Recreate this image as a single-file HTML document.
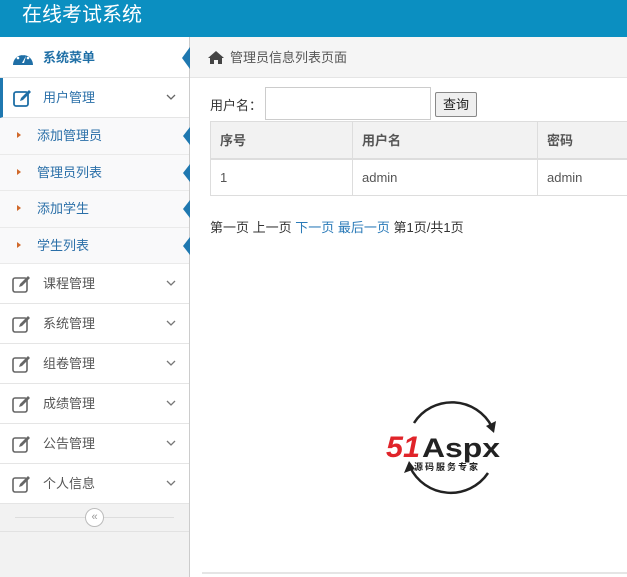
<!DOCTYPE html>
<html><head><meta charset="utf-8"><style>
*{margin:0;padding:0;box-sizing:border-box}
body{width:627px;height:577px;overflow:hidden;font-family:"Liberation Sans","Noto Sans CJK SC",sans-serif;font-size:13px;color:#333;background:#fff;position:relative}
.top{position:absolute;left:0;top:0;width:627px;height:37px;background:#0b8fc1;color:#fff;font-size:20px;line-height:30px;padding-left:22px}
.side{position:absolute;left:0;top:37px;width:190px;height:540px;background:#f2f2f2;border-right:1px solid #ccc}
.row{position:relative;height:40px;border-bottom:1px solid #e5e5e5;background:#fff;line-height:39px;padding-left:43px;color:#555;font-size:13px}
.row svg.ic{position:absolute;left:12px;top:11px}
.row .chev{position:absolute;left:166px;top:16px}
.menuhead{background:#fff;color:#1f6fa6;font-weight:bold;height:41px;line-height:41px}
.sub{position:relative;height:36.5px;line-height:35px;padding-left:37px;color:#2a6fa8;background:#f9f9fa;border-bottom:1px solid #eaeaea}
.sub:before{content:"";position:absolute;left:17px;top:14px;border-left:4px solid #d0692b;border-top:3px solid transparent;border-bottom:3px solid transparent}
.tri{position:absolute;right:-1px;border-right:7px solid #1f78b0;border-top:9px solid transparent;border-bottom:9px solid transparent}
.main{position:absolute;left:190px;top:37px;width:437px;height:540px;background:#fff}
.bc{height:41px;background:#f5f5f5;border-bottom:1px solid #e5e5e5;line-height:41px;padding-left:40px;position:relative;font-size:13px;color:#555}
table{position:absolute;left:20px;top:84px;border-collapse:collapse;width:430px}
td,th{border:1px solid #ddd;text-align:left;padding-left:9px;font-weight:normal;color:#555}
th{height:37px;background:#f2f2f2;font-weight:bold;border-bottom:2px solid #ddd}
td{height:37px;background:#fff}
a{color:#2a7ab8;text-decoration:none}
</style></head><body>
<div class="top">在线考试系统</div>
<div class="side">
 <div class="row menuhead" style="padding-left:43px">
  <svg class="ic" width="22" height="18" viewBox="0 0 22 18" style="top:12px"><path d="M1 16 A10 10 0 1 1 21 16 Z" fill="#1f6fa6"/><circle cx="6" cy="9" r="1.3" fill="#fff"/><circle cx="11" cy="5" r="1.3" fill="#fff"/><circle cx="16" cy="9" r="1.3" fill="#fff"/><path d="M10 14 L14 7 L12 14Z" fill="#fff"/></svg>
  系统菜单<span class="tri" style="top:10px;border-right-width:8px;border-top-width:11px;border-bottom-width:11px"></span></div>
 <div class="row" style="border-left:3px solid #1f78b0;padding-left:40px;color:#2a6fa8;background:#fff">
  <svg class="ic" width="20" height="18" viewBox="0 0 20 18" style="left:10px"><rect x="1" y="3" width="14" height="14" rx="2" fill="none" stroke="#1f6fa6" stroke-width="1.8"/><path d="M7 12 L8 9 L16 1 L18 3 L10 11 Z" fill="#1f6fa6"/></svg>
  用户管理<svg class="chev" width="10" height="7" style="left:163px"><path d="M1 1 L5 5 L9 1" fill="none" stroke="#666" stroke-width="1.3"/></svg></div>
 <div class="sub">添加管理员<span class="tri" style="top:9px"></span></div>
 <div class="sub">管理员列表<span class="tri" style="top:9px"></span></div>
 <div class="sub">添加学生<span class="tri" style="top:9px"></span></div>
 <div class="sub">学生列表<span class="tri" style="top:9px"></span></div>
 <div class="row">%I%课程管理%C%</div>
 <div class="row">%I%系统管理%C%</div>
 <div class="row">%I%组卷管理%C%</div>
 <div class="row">%I%成绩管理%C%</div>
 <div class="row">%I%公告管理%C%</div>
 <div class="row">%I%个人信息%C%</div>
 <div style="height:28px;background:#f2f2f2;border-bottom:1px solid #e2e2e2;position:relative">
  <div style="position:absolute;left:15px;right:15px;top:13px;border-top:1px solid #ddd"></div>
  <div style="position:absolute;left:85px;top:4px;width:19px;height:19px;border-radius:50%;border:1px solid #bbb;background:#fff;font-size:11px;line-height:16px;text-align:center;color:#999">«</div>
 </div>
</div>
<div class="main">
 <div class="bc"><svg style="position:absolute;left:17px;top:13px" width="18" height="15" viewBox="0 0 18 15"><path d="M9 1 L1 8 L3 8 L3 14 L7 14 L7 10 L11 10 L11 14 L15 14 L15 8 L17 8 Z" fill="#444"/></svg>管理员信息列表页面</div>
 <div style="position:absolute;left:20px;top:58px;color:#333">用户名：</div>
 <div style="position:absolute;left:75px;top:50px;width:166px;height:33px;border:1px solid #ccc;background:#fff"></div>
 <div style="position:absolute;left:245px;top:55px;width:42px;height:25px;border:1px solid #888;border-radius:2px;background:#efefef;text-align:center;line-height:23px;color:#222">查询</div>
 <table><tr><th style="width:142px">序号</th><th style="width:185px">用户名</th><th>密码</th></tr>
 <tr><td>1</td><td>admin</td><td>admin</td></tr></table>
 <div style="position:absolute;left:20px;top:180px;color:#333">第一页 上一页 <a>下一页</a> <a>最后一页</a> 第1页/共1页</div>
 <svg style="position:absolute;left:190px;top:358px" width="140" height="105" viewBox="0 0 140 105">
  <path d="M34 28 A45 45 0 0 1 112 32" fill="none" stroke="#222" stroke-width="2.5"/>
  <path d="M108 78 A45 45 0 0 1 30 72" fill="none" stroke="#222" stroke-width="2.5"/>
  <path d="M116 26 L114 38 L106 31Z" fill="#222"/><path d="M24 78 L29 66 L35 74Z" fill="#222"/>
  <text x="6" y="62" font-family="Liberation Sans" font-weight="bold" font-style="italic" font-size="30" fill="#e0242a" textLength="34" lengthAdjust="spacingAndGlyphs">51</text>
  <text x="42" y="62" font-family="Liberation Sans" font-weight="bold" font-size="27" fill="#222" textLength="78" lengthAdjust="spacingAndGlyphs">Aspx</text>
  <text x="34" y="75" font-family="Noto Sans CJK SC" font-size="9" font-weight="bold" fill="#222" textLength="64">源码服务专家</text>
 </svg>
 <div style="position:absolute;left:12px;top:535px;right:0;border-top:2px solid #e5e5e5"></div>
</div>
<script>
var I='<svg class="ic" width="20" height="18" viewBox="0 0 20 18"><rect x="1" y="3" width="14" height="14" rx="2" fill="none" stroke="#666" stroke-width="1.6"/><path d="M7 12 L8 9 L16 1 L18 3 L10 11 Z" fill="#666"/></svg>';
var C='<svg class="chev" width="10" height="7"><path d="M1 1 L5 5 L9 1" fill="none" stroke="#777" stroke-width="1.3"/></svg>';
document.querySelectorAll('.row').forEach(function(r){r.innerHTML=r.innerHTML.replace('%I%',I).replace('%C%',C);});
</script>
</body></html>
